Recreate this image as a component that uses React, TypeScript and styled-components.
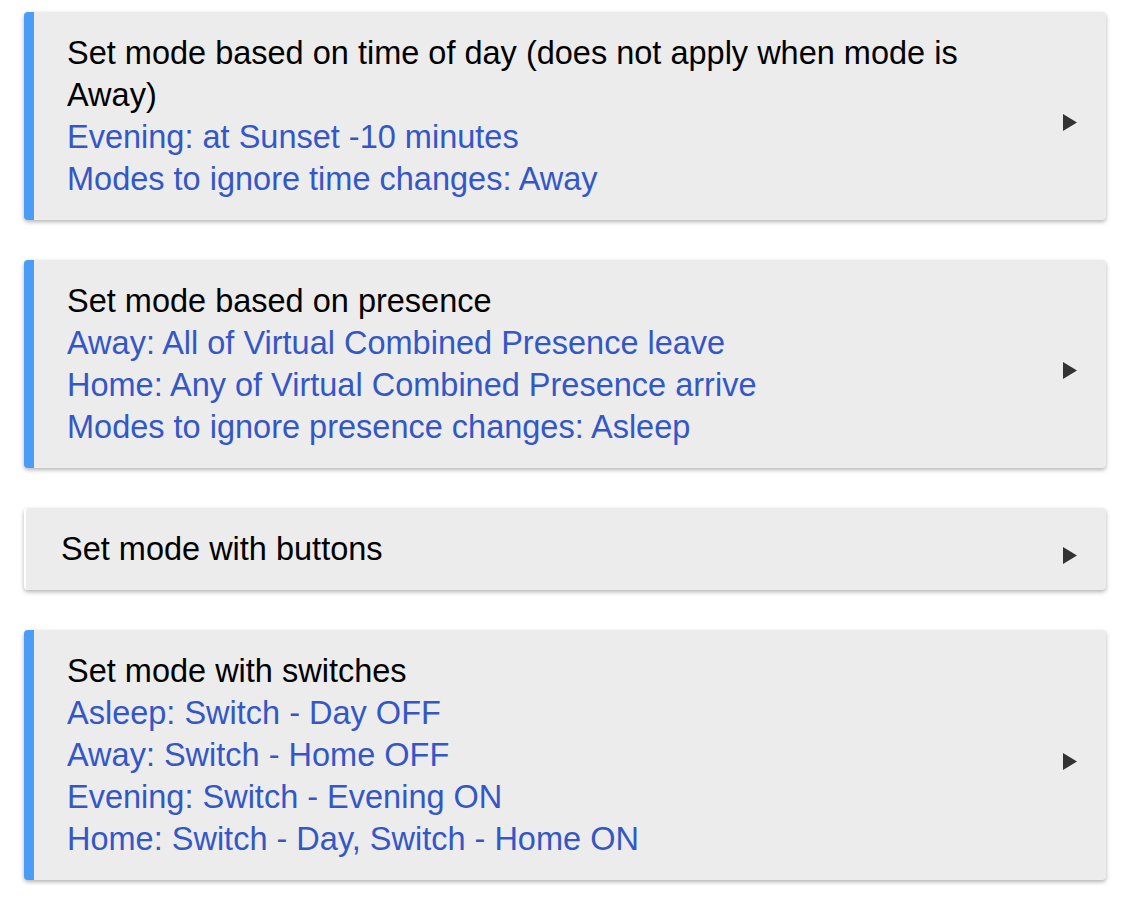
import React from "react";
import styled, { createGlobalStyle } from "styled-components";

const Global = createGlobalStyle`
  html, body { margin: 0; padding: 0; background: #ffffff; }
  body { font-family: "Liberation Sans", Arial, Helvetica, sans-serif; }
`;

const Page = styled.div`
  display: flex;
  flex-direction: column;
  gap: 40px;
  padding: 12px 30px 24px 24px;
`;

const Card = styled.div<{ $accent: boolean }>`
  display: flex;
  align-items: center;
  background: #ececec;
  border-left: ${(p) => (p.$accent ? "10px solid #4a9cf7" : "2px solid #ffffff")};
  border-radius: 4px;
  box-shadow: 0 2px 4px rgba(0, 0, 0, 0.3);
  padding: 20px 28px 20px ${(p) => (p.$accent ? 33 : 35)}px;
`;

const Body = styled.div`
  flex: 1;
  min-width: 0;
  padding-right: 60px;
  font-size: 32.5px;
  line-height: 42px;
`;

const Title = styled.div`
  color: #000000;
`;

const Line = styled.div`
  color: #3457c7;
`;

const Arrow = styled.svg`
  flex: none;
  width: 14px;
  height: 17px;
  margin-top: 12px;
  margin-right: 1px;
`;

type Item = { title: string; lines: string[] };

const items: Item[] = [
  {
    title: "Set mode based on time of day (does not apply when mode is Away)",
    lines: ["Evening: at Sunset -10 minutes", "Modes to ignore time changes: Away"],
  },
  {
    title: "Set mode based on presence",
    lines: [
      "Away: All of Virtual Combined Presence leave",
      "Home: Any of Virtual Combined Presence arrive",
      "Modes to ignore presence changes: Asleep",
    ],
  },
  { title: "Set mode with buttons", lines: [] },
  {
    title: "Set mode with switches",
    lines: [
      "Asleep: Switch - Day OFF",
      "Away: Switch - Home OFF",
      "Evening: Switch - Evening ON",
      "Home: Switch - Day, Switch - Home ON",
    ],
  },
];

export default function App() {
  return (
    <>
      <Global />
      <Page>
        {items.map((it) => (
          <Card key={it.title} $accent={it.lines.length > 0}>
            <Body>
              <Title>{it.title}</Title>
              {it.lines.map((l) => (
                <Line key={l}>{l}</Line>
              ))}
            </Body>
            <Arrow viewBox="0 0 14 17">
              <path d="M0 0 L14 8.5 L0 17 Z" fill="#333333" />
            </Arrow>
          </Card>
        ))}
      </Page>
    </>
  );
}
